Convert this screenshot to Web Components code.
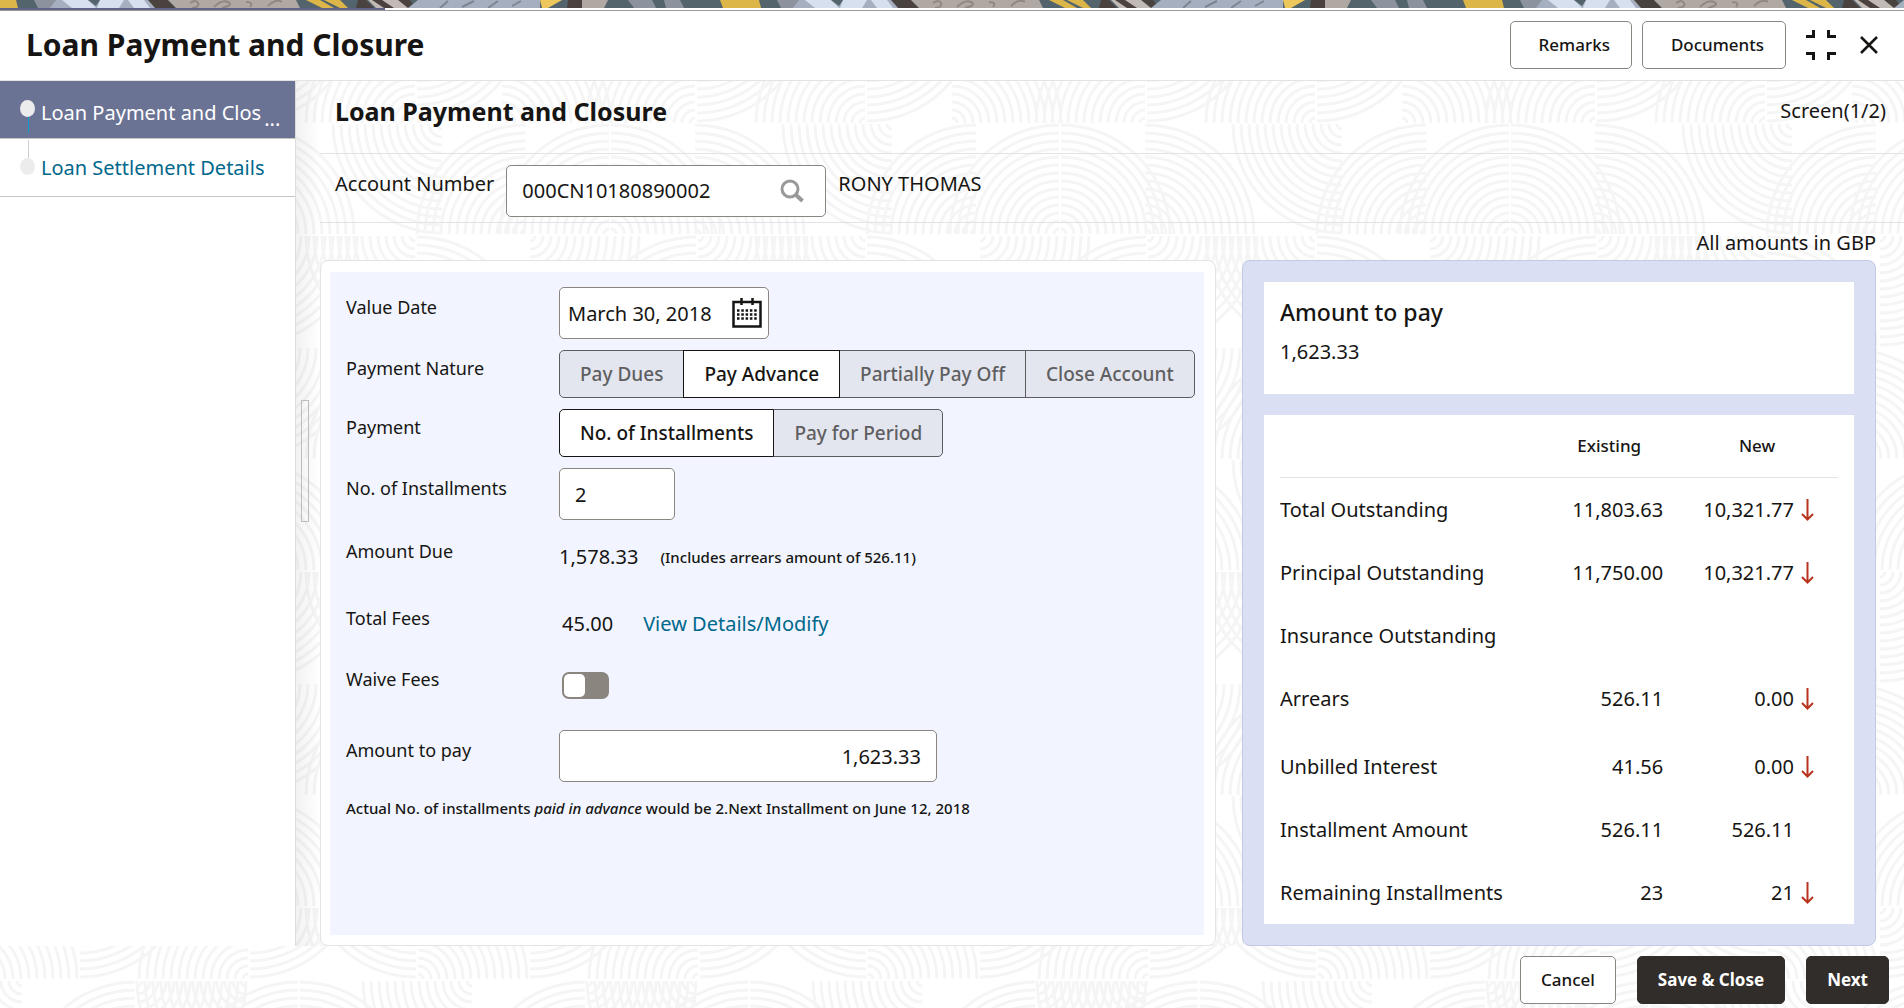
<!DOCTYPE html>
<html lang="en">
<head>
<meta charset="utf-8">
<meta name="viewport" content="width=device-width, initial-scale=1">
<title>Loan Payment and Closure</title>
<style>
    body {
        margin: 0;
        color: #161513;
        font-family: "Noto Sans", "Open Sans", sans-serif;
        font-size: 20px;
        line-height: 24px;
        --border: #8b8580;
        --rule: #e3e3e3;
        --link: #00688c;
        --ink: #312d2a;
    }
</style>
</head>
<body>
<loan-page></loan-page>

<script>
    // ---------- Background line art ----------

    // Each fan is a quarter circle of concentric arcs: [cx, cy, quadrant]
    const fanTile = (width, height, fans) => {
        const ends = {
            ul: (x, y, r) => `M${x - r} ${y}A${r} ${r} 0 0 1 ${x} ${y - r}`,
            ur: (x, y, r) => `M${x} ${y - r}A${r} ${r} 0 0 1 ${x + r} ${y}`,
            lr: (x, y, r) => `M${x + r} ${y}A${r} ${r} 0 0 1 ${x} ${y + r}`,
            ll: (x, y, r) => `M${x} ${y + r}A${r} ${r} 0 0 1 ${x - r} ${y}`
        };
        let d = '';
        fans.forEach(([x, y, quadrant]) => {
            // draw a copy one tile to each side so that arcs wrap
            [-width, 0, width].forEach((shift) => {
                for (let r = 5; r < 112; r += 8) {
                    d += ends[quadrant](x + shift, y, r);
                }
            });
        });
        const svg = `<svg xmlns="http://www.w3.org/2000/svg" width="${width}" height="${height}"><path d="${d}" fill="none" stroke="#f5f5f5" stroke-width="3"/></svg>`;
        return `url("data:image/svg+xml,${encodeURIComponent(svg)}")`;
    };

    const pageArt = fanTile(450, 336, [
        [415, 111, 'ul'], [417, 0, 'lr'], [52, 111, 'ur'], [245, 111, 'ul'], [247, 0, 'lr'],
        [159, 222, 'ul'], [161, 222, 'ur'], [245, 222, 'ur'], [76, 222, 'ul'], [442, 112, 'll'],
        [415, 224, 'll'], [417, 334, 'ur'], [80, 224, 'lr'], [246, 334, 'ul'], [248, 224, 'lr']
    ]);

    const footerArt = fanTile(450, 224, [
        [418, 111, 'ur'], [80, 0, 'lr'], [248, 111, 'ul'], [250, 0, 'lr'], [416, 0, 'll'],
        [22, 113, 'll'], [135, 223, 'ul'], [137, 113, 'lr'], [246, 113, 'll'], [298, 223, 'ul'], [300, 223, 'ur']
    ]);

    // ---------- Basic parts ----------

    class TopBanner extends HTMLElement {
        connectedCallback() {
            this.attachShadow({ mode: 'open' }).innerHTML = `
                <style>
                    :host { display: block; border-bottom: 1px solid #989898; }
                    svg { display: block; width: 100%; height: 8px; }
                    .progress { height: 2px; background: linear-gradient(90deg, #5f6388 385px, #fff 385px); }
                </style>
                <svg aria-hidden="true">
                    <defs>
                        <pattern id="weave" width="743" height="8" patternUnits="userSpaceOnUse">
                            <rect width="743" height="8" fill="#54646c"/>
                            <path d="M0 0h16l2 8H0z" fill="#ddb64a"/>
                            <path d="M34 0h22l-4 8H38z" fill="#8c939f"/>
                            <path d="M56 0h96l6 8H50z" fill="#a5afbf"/>
                            <path d="M62 0h26l8 8H72zM100 0h24l-5 8h-22zM128 0h16l6 8h-16z" fill="#d7e0ef"/>
                            <path d="M88 0h12l-4 6z" fill="#54646c"/>
                            <path d="M148 0h20l8 8h-21z" fill="#4a423e"/>
                            <path d="M168 0h128l4 8H176z" fill="#b0a8a2"/>
                            <path d="M190 3q6-4 8 0t-6 5M214 7q8-8 14-5t-6 6M246 2q8 0 4 5M268 6q8-8 14-4" fill="none" stroke="#8f8883" stroke-width="2"/>
                            <path d="M306 0h14l14 8h-12zM324 0h16l8 8h-8z" fill="#ddb64a"/>
                            <path d="M358 0h8l8 8h-18zM398 0h12l6 8h-9z" fill="#4a423e"/>
                            <path d="M368 0h30l10 8h-32z" fill="#c2bab5"/>
                            <path d="M372 0h10l12 8h-10z" fill="#4a423e"/>
                            <path d="M418 0h122v8H408z" fill="#a5afbf"/>
                            <path d="M440 8l8-7M462 7l12-6M488 8l10-7M512 6l9-5" stroke="#7c8693" stroke-width="2"/>
                            <path d="M540 0h22l-14 8h-6z" fill="#edc65c"/>
                            <path d="M568 0h14v8h-15z" fill="#4a423e"/>
                            <path d="M582 0h26l-4 8h-22z" fill="#b0a8a2"/>
                            <path d="M628 0h24l4 8h-22zM664 0h16l4 8h-18z" fill="#8c939f"/>
                            <path d="M720 0h23v8h-20z" fill="#ddb64a"/>
                        </pattern>
                    </defs>
                    <rect width="100%" height="8" fill="url(#weave)"/>
                </svg>
                <div class="progress"></div>
            `;
        }
    }
    customElements.define('top-banner', TopBanner);

    class ActionButton extends HTMLElement {
        connectedCallback() {
            this.attachShadow({ mode: 'open' }).innerHTML = `
                <style>
                    :host { display: block; }
                    button {
                        height: 48px;
                        padding: 0 20px;
                        border: 1px solid var(--border);
                        border-radius: 5px;
                        background: #fff;
                        color: #161513;
                        font: 500 17px/24px "Noto Sans", sans-serif;
                        white-space: nowrap;
                    }
                    :host([indent]) button { padding: 0 21px 0 28px; }
                    :host([primary]) button {
                        border-color: var(--ink);
                        background: var(--ink);
                        color: #fff;
                        font-weight: 700;
                    }
                </style>
                <button type="button"><slot></slot></button>
            `;
        }
    }
    customElements.define('action-button', ActionButton);

    class PageHeader extends HTMLElement {
        connectedCallback() {
            this.attachShadow({ mode: 'open' }).innerHTML = `
                <style>
                    :host {
                        display: flex;
                        align-items: center;
                        gap: 10px;
                        height: 67px;
                        padding: 0 26px 2px;
                        border-bottom: 1px solid var(--rule);
                        background: #fff;
                    }
                    h1 { flex: 1; margin: 0; font-size: 30px; line-height: 36px; font-weight: 700; }
                    .icon { padding: 0; border: 0; background: none; color: #161513; }
                    .icon svg { display: block; }
                    .collapse { margin: 0 14px 0 10px; }
                </style>
                <h1>Loan Payment and Closure</h1>
                <action-button indent>Remarks</action-button>
                <action-button indent>Documents</action-button>
                <button class="icon collapse" type="button" aria-label="Collapse">
                    <svg width="30" height="30" viewBox="0 0 30 30" fill="none" stroke="currentColor" stroke-width="3">
                        <path d="M0 6.500h7.500V0M22.500 0v6.500H30M0 23.500h7.500V30M22.500 30v-6.500H30"/>
                    </svg>
                </button>
                <button class="icon" type="button" aria-label="Close">
                    <svg width="18" height="18" viewBox="0 0 18 18" fill="none" stroke="currentColor" stroke-width="2.500">
                        <path d="M1 1l16 16M17 1L1 17"/>
                    </svg>
                </button>
            `;
        }
    }
    customElements.define('page-header', PageHeader);

    class StepNav extends HTMLElement {
        connectedCallback() {
            this.attachShadow({ mode: 'open' }).innerHTML = `
                <style>
                    :host {
                        display: block;
                        width: 295px;
                        border-right: 1px solid #dcdcdc;
                        background: #fff;
                    }
                    ol { margin: 0; padding: 0; list-style: none; }
                    li {
                        display: flex;
                        align-items: stretch;
                        gap: 6px;
                        height: 57px;
                        padding-left: 20px;
                        border-bottom: 1px solid #c9c5bf;
                    }
                    svg { display: block; flex: none; }
                    a {
                        align-self: center;
                        color: var(--link);
                        text-decoration: none;
                        white-space: nowrap;
                    }
                    .active { background: #6b7394; }
                    .active a { color: #fff; padding-top: 6px; }
                    .dots { align-self: flex-end; padding-bottom: 7px; margin-left: -3px; color: #fff; }
                </style>
                <nav aria-label="Steps">
                    <ol>
                        <li class="active">
                            <svg width="15" height="57"><path d="M8.500 36v16" stroke="#0f9bd0"/><ellipse cx="7.500" cy="27.500" rx="7.500" ry="8.500" fill="#ececec"/></svg>
                            <a href="#payment" aria-current="step">Loan Payment and Clos</a>
                            <span class="dots">...</span>
                        </li>
                        <li>
                            <svg width="15" height="57"><path d="M8.500 1v18" stroke="#d0d0d0"/><ellipse cx="7.500" cy="27.500" rx="7.500" ry="8.500" fill="#ececec"/></svg>
                            <a href="#settlement">Loan Settlement Details</a>
                        </li>
                    </ol>
                </nav>
            `;
        }
    }
    customElements.define('step-nav', StepNav);

    class AccountBar extends HTMLElement {
        connectedCallback() {
            this.attachShadow({ mode: 'open' }).innerHTML = `
                <style>
                    :host {
                        display: flex;
                        align-items: flex-start;
                        gap: 12px;
                        height: 57px;
                        padding: 11px 0 0 15px;
                        border-bottom: 1px solid var(--rule);
                    }
                    label, span { padding-top: 7px; }
                    .lookup {
                        box-sizing: border-box;
                        display: flex;
                        align-items: center;
                        width: 320px;
                        height: 52px;
                        padding: 0 21px 0 15px;
                        border: 1px solid var(--border);
                        border-radius: 5px;
                        background: #fff;
                    }
                    input { flex: 1; min-width: 0; padding: 0; border: 0; outline: 0; background: none; color: inherit; font: inherit; }
                    button { padding: 0; border: 0; background: none; color: #999; }
                    svg { display: block; }
                </style>
                <label for="account">Account Number</label>
                <div class="lookup">
                    <input id="account" type="text" value="000CN10180890002">
                    <button type="button" aria-label="Search">
                        <svg width="24" height="24" viewBox="0 0 24 24" fill="none" stroke="currentColor">
                            <circle cx="10" cy="10" r="8" stroke-width="3"/>
                            <path d="M15.500 15.500l7 6.500" stroke-width="4"/>
                        </svg>
                    </button>
                </div>
                <span>RONY THOMAS</span>
            `;
        }
    }
    customElements.define('account-bar', AccountBar);

    // ---------- Payment form ----------

    class FormRow extends HTMLElement {
        connectedCallback() {
            this.attachShadow({ mode: 'open' }).innerHTML = `
                <style>
                    :host {
                        display: grid;
                        grid-template-columns: 213px 1fr;
                        align-items: center;
                        min-height: 48px;
                    }
                    .label { padding-bottom: 12px; font-size: 18px; }
                    .control { display: flex; align-items: center; }
                </style>
                <div class="label"><slot name="label"></slot></div>
                <div class="control"><slot></slot></div>
            `;
        }
    }
    customElements.define('form-row', FormRow);

    class SegmentedControl extends HTMLElement {
        connectedCallback() {
            this.attachShadow({ mode: 'open' }).innerHTML = `
                <style>
                    :host { display: flex; }
                    ::slotted(button) {
                        position: relative;
                        height: 48px;
                        margin: 0 0 0 -1px;
                        padding: 0 20px;
                        border: 1px solid #5c5c5e;
                        background: #e4e6ef;
                        color: #5f5f61;
                        font: 500 19px/24px "Noto Sans", sans-serif;
                        white-space: nowrap;
                    }
                    ::slotted(button:first-of-type) { margin-left: 0; border-radius: 5px 0 0 5px; }
                    ::slotted(button:last-of-type) { border-radius: 0 5px 5px 0; }
                    ::slotted(button[aria-pressed="true"]) {
                        z-index: 1;
                        border-color: #161513;
                        background: #fff;
                        color: #161513;
                    }
                </style>
                <slot></slot>
            `;
            this.setAttribute('role', 'group');
            this.addEventListener('click', (event) => {
                const picked = event.target.closest('button');
                if (!picked) return;
                this.querySelectorAll('button').forEach((button) => {
                    button.setAttribute('aria-pressed', button === picked);
                });
            });
        }
    }
    customElements.define('segmented-control', SegmentedControl);

    class PaymentForm extends HTMLElement {
        connectedCallback() {
            this.attachShadow({ mode: 'open' }).innerHTML = `
                <style>
                    :host {
                        display: flex;
                        padding: 11px 11px 10px 9px;
                        border: 1px solid var(--rule);
                        border-radius: 8px;
                        background: #fff;
                    }
                    form {
                        flex: 1;
                        display: flex;
                        flex-direction: column;
                        gap: 11px;
                        padding: 15px 8px 15px 16px;
                        background: #f2f5ff;
                    }
                    input[type="text"], .date {
                        box-sizing: border-box;
                        height: 52px;
                        padding: 0 15px;
                        border: 1px solid var(--border);
                        border-radius: 5px;
                        background: #fff;
                        color: inherit;
                        font: inherit;
                    }
                    .date { display: flex; align-items: center; justify-content: space-between; width: 210px; padding: 0 6px 0 8px; }
                    .date input[type="text"] { width: 150px; height: 48px; padding: 0; border: 0; outline: 0; }
                    .date button { padding: 0; border: 0; background: none; color: #161513; }
                    .date svg { display: block; }
                    #count { width: 116px; }
                    #amount { width: 378px; text-align: right; }
                    small { margin-left: 22px; font-size: 15px; font-weight: 500; }
                    output { line-height: 28px; }
                    a { margin-left: 30px; color: var(--link); text-decoration: none; }
                    .indent { margin-left: 3px; }
                    .switch {
                        appearance: none;
                        display: flex;
                        width: 47px;
                        height: 27px;
                        margin: 0 0 0 3px;
                        padding: 2px;
                        border-radius: 7px;
                        background: #8b8580;
                    }
                    .switch::before { content: ""; width: 21px; border-radius: 5px; background: #fff; }
                    .switch:checked { justify-content: flex-end; }
                    .fees { min-height: 60px; }
                    .waive { min-height: 40px; margin-bottom: 14px; }
                    .due { min-height: 52px; }
                    p { margin: 0; font-size: 15px; line-height: 30px; font-weight: 500; }
                </style>
                <form>
                    <form-row>
                        <label slot="label" for="date">Value Date</label>
                        <div class="date">
                            <input id="date" type="text" value="March 30, 2018">
                            <button type="button" aria-label="Open calendar">
                                <svg width="30" height="30" viewBox="0 0 30 30" fill="none" stroke="currentColor">
                                    <path d="M1.500 4h27v24.500h-27z" stroke-width="2.500"/>
                                    <path d="M9.500 0v7M20.500 0v7" stroke-width="2.500"/>
                                    <path d="M5 12.500h20M5 16.500h20M5 20.500h20" stroke-width="2.500" stroke-dasharray="2.500 1.800"/>
                                </svg>
                            </button>
                        </div>
                    </form-row>
                    <form-row>
                        <span slot="label">Payment Nature</span>
                        <segmented-control aria-label="Payment Nature">
                            <button type="button" aria-pressed="false">Pay Dues</button>
                            <button type="button" aria-pressed="true">Pay Advance</button>
                            <button type="button" aria-pressed="false">Partially Pay Off</button>
                            <button type="button" aria-pressed="false">Close Account</button>
                        </segmented-control>
                    </form-row>
                    <form-row>
                        <span slot="label">Payment</span>
                        <segmented-control aria-label="Payment">
                            <button type="button" aria-pressed="true">No. of Installments</button>
                            <button type="button" aria-pressed="false">Pay for Period</button>
                        </segmented-control>
                    </form-row>
                    <form-row>
                        <label slot="label" for="count">No. of Installments</label>
                        <input id="count" type="text" value="2">
                    </form-row>
                    <form-row class="due">
                        <span slot="label">Amount Due</span>
                        <output>1,578.33</output>
                        <small>(Includes arrears amount of 526.11)</small>
                    </form-row>
                    <form-row class="fees">
                        <span slot="label">Total Fees</span>
                        <output class="indent">45.00</output>
                        <a href="#fees">View Details/Modify</a>
                    </form-row>
                    <form-row class="waive">
                        <label slot="label" for="waive">Waive Fees</label>
                        <input id="waive" class="switch" type="checkbox" role="switch">
                    </form-row>
                    <form-row>
                        <label slot="label" for="amount">Amount to pay</label>
                        <input id="amount" type="text" value="1,623.33">
                    </form-row>
                    <p>Actual No. of installments <em>paid in advance</em> would be 2.Next Installment on June 12, 2018</p>
                </form>
            `;
        }
    }
    customElements.define('payment-form', PaymentForm);

    // ---------- Summary ----------

    class PaymentSummary extends HTMLElement {
        connectedCallback() {
            const rows = [
                ['Total Outstanding', '11,803.63', '10,321.77', true],
                ['Principal Outstanding', '11,750.00', '10,321.77', true],
                ['Insurance Outstanding', '', '', false],
                ['Arrears', '526.11', '0.00', true],
                ['Unbilled Interest', '41.56', '0.00', true],
                ['Installment Amount', '526.11', '526.11', false],
                ['Remaining Installments', '23', '21', true]
            ];
            const arrow = '<svg width="13" height="22" viewBox="0 0 13 22" fill="none" stroke="#b8341f" stroke-width="2"><path d="M6.500 0v20M1 15l5.500 5.500L12 15"/></svg>';
            this.attachShadow({ mode: 'open' }).innerHTML = `
                <style>
                    :host {
                        display: flex;
                        flex-direction: column;
                        gap: 21px;
                        padding: 21px;
                        border: 1px solid #c3c9e3;
                        border-radius: 8px;
                        background: #dadff3;
                    }
                    section { padding: 0 16px; background: #fff; }
                    .total { height: 94px; padding-top: 18px; }
                    .changes { flex: 1; }
                    h2 { margin: 0 0 16px; font-size: 23px; line-height: 24px; font-weight: 500; }
                    .total p { margin: 0; }
                    table { width: 100%; border-collapse: collapse; table-layout: fixed; font-size: 20px; }
                    th, td { height: 63px; padding: 0; font-weight: 400; text-align: left; }
                    thead td, thead th { height: 62px; border-bottom: 1px solid var(--rule); font-size: 17px; font-weight: 500; text-align: center; }
                    col:nth-child(1) { width: 47%; }
                    col:nth-child(2) { width: 24%; }
                    tbody td { text-align: right; }
                    tbody td:nth-child(2) { padding-right: 13px; }
                    tbody tr:nth-child(5) > * { padding-top: 5px; }
                    .new { display: flex; align-items: center; justify-content: flex-end; gap: 7px; padding-right: 24px; }
                    .mark { width: 13px; height: 22px; }
                    .mark svg { display: block; }
                </style>
                <section class="total">
                    <h2>Amount to pay</h2>
                    <p>1,623.33</p>
                </section>
                <section class="changes">
                    <table>
                        <colgroup><col><col><col></colgroup>
                        <thead>
                            <tr><td></td><th scope="col">Existing</th><th scope="col">New</th></tr>
                        </thead>
                        <tbody>
                            ${rows.map(([name, existing, next, lower]) => `
                                <tr>
                                    <th scope="row">${name}</th>
                                    <td>${existing}</td>
                                    <td><div class="new">${next}<span class="mark">${lower ? arrow : ''}</span></div></td>
                                </tr>
                            `).join('')}
                        </tbody>
                    </table>
                </section>
            `;
        }
    }
    customElements.define('payment-summary', PaymentSummary);

    // ---------- Page ----------

    class LoanPage extends HTMLElement {
        connectedCallback() {
            this.attachShadow({ mode: 'open' }).innerHTML = `
                <style>
                    :host {
                        display: flex;
                        flex-direction: column;
                        min-height: 100vh;
                        background: #fff ${pageArt} 0 12px;
                    }
                    .body { flex: 1; display: flex; }
                    step-nav { flex: none; }
                    .splitter {
                        flex: none;
                        width: 24px;
                        background: linear-gradient(90deg, rgba(0, 0, 0, 0.05), rgba(0, 0, 0, 0));
                    }
                    .splitter::before {
                        content: "";
                        display: block;
                        box-sizing: border-box;
                        width: 8px;
                        height: 122px;
                        margin: 319px 0 0 5px;
                        border: 1px solid #bdbdbd;
                    }
                    main { flex: 1; min-width: 0; display: flex; flex-direction: column; }
                    .title {
                        display: flex;
                        align-items: flex-start;
                        justify-content: space-between;
                        height: 54px;
                        padding: 18px 18px 0 15px;
                        border-bottom: 1px solid var(--rule);
                    }
                    .title h2 { margin: 0; font-size: 25px; line-height: 24px; font-weight: 700; }
                    .currency { margin: 0; padding: 8px 28px 5px; text-align: right; }
                    .panels {
                        flex: 1;
                        display: grid;
                        grid-template-columns: minmax(0, 896fr) minmax(0, 634fr);
                        gap: 26px;
                        padding-right: 28px;
                    }
                    footer {
                        display: flex;
                        justify-content: flex-end;
                        gap: 21px;
                        padding: 10px 15px 4px;
                        background: #fff ${footerArt} 0 -78px;
                    }
                </style>
                <top-banner></top-banner>
                <page-header></page-header>
                <div class="body">
                    <step-nav></step-nav>
                    <div class="splitter"></div>
                    <main>
                        <div class="title">
                            <h2>Loan Payment and Closure</h2>
                            <span>Screen(1/2)</span>
                        </div>
                        <account-bar></account-bar>
                        <p class="currency">All amounts in GBP</p>
                        <div class="panels">
                            <payment-form></payment-form>
                            <payment-summary></payment-summary>
                        </div>
                    </main>
                </div>
                <footer>
                    <action-button>Cancel</action-button>
                    <action-button primary>Save &amp; Close</action-button>
                    <action-button primary>Next</action-button>
                </footer>
            `;
        }
    }
    customElements.define('loan-page', LoanPage);
</script>
</body>
</html>
